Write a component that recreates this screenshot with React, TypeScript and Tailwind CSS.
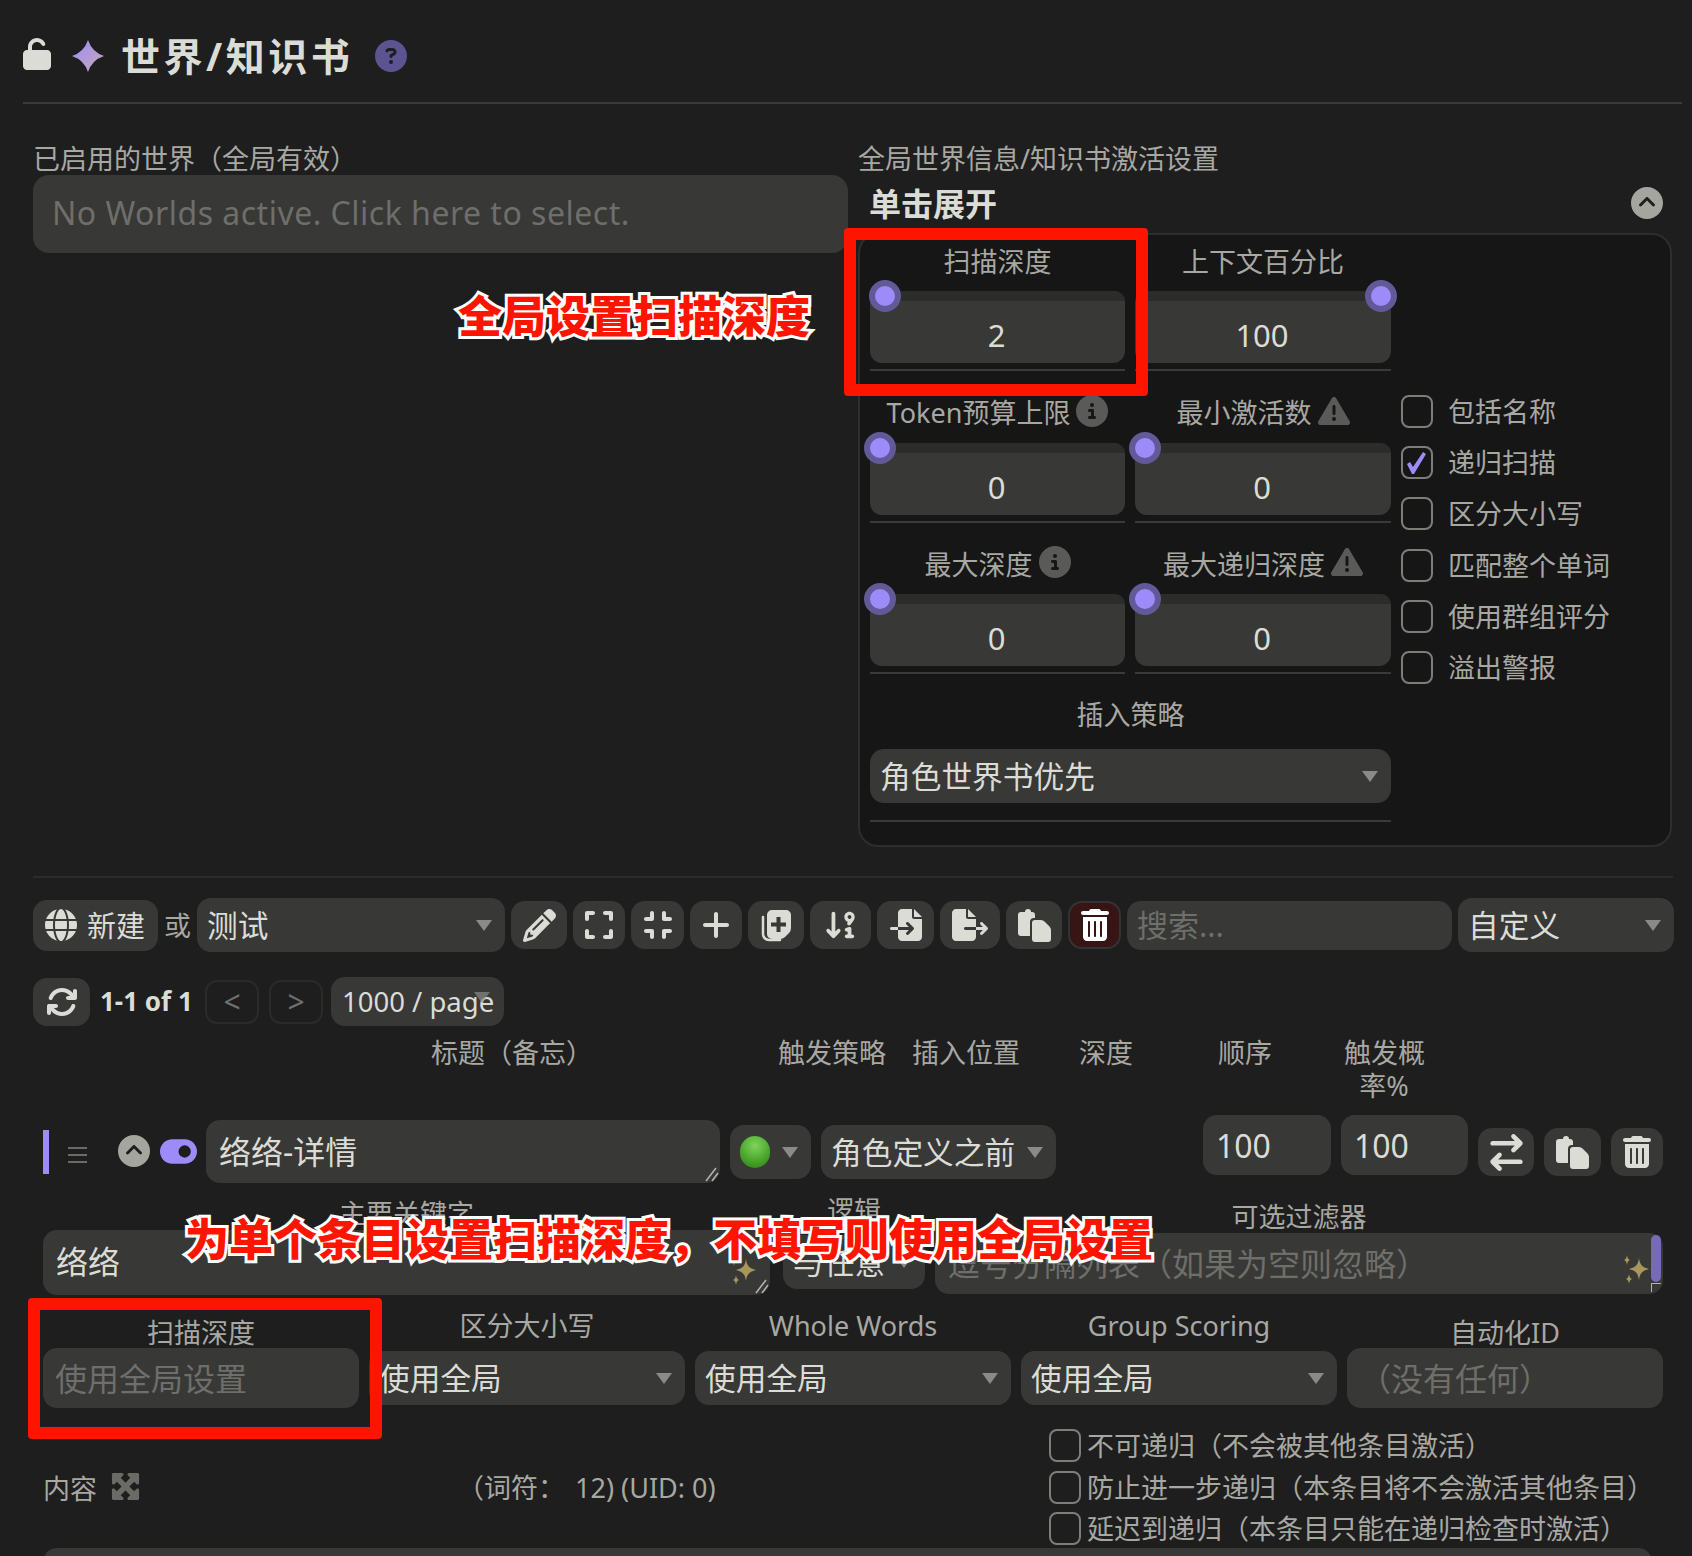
import type { ReactNode } from "react";
import {
  FaArrowDown91,
  FaArrowRightArrowLeft,
  FaArrowsRotate,
  FaCircleChevronUp,
  FaCircleInfo,
  FaCircleQuestion,
  FaCompress,
  FaExpand,
  FaFileExport,
  FaFileImport,
  FaGlobe,
  FaMaximize,
  FaPencil,
  FaPlus,
  FaToggleOn,
  FaTrashCan,
  FaTriangleExclamation,
  FaUnlock,
} from "react-icons/fa6";

const sliders = [
  { label: "扫描深度", value: "2", thumb: "left-[-1px]", top: "" },
  { label: "上下文百分比", value: "100", thumb: "left-[230px]", top: "" },
  { label: "Token预算上限", value: "0", thumb: "left-[-6px]", icon: "info" },
  { label: "最小激活数", value: "0", thumb: "left-[-6px]", icon: "warn" },
  { label: "最大深度", value: "0", thumb: "left-[-6px]", icon: "info" },
  { label: "最大递归深度", value: "0", thumb: "left-[-6px]", icon: "warn" },
];

const checks = ["包括名称", "递归扫描", "区分大小写", "匹配整个单词", "使用群组评分", "溢出警报"];

const entryChecks = [
  "不可递归（不会被其他条目激活）",
  "防止进一步递归（本条目将不会激活其他条目）",
  "延迟到递归（本条目只能在递归检查时激活）",
];

function Arrow() {
  return (
    <svg width="16" height="11" viewBox="0 0 16 11" className="shrink-0">
      <path d="M0 0h16L8 11z" fill="#8a8a86" />
    </svg>
  );
}

function Select({ text, className }: { text: string; className: string }) {
  return (
    <div
      className={`flex h-[54px] items-center justify-between rounded-[14px] bg-[#383836] pl-[10px] pr-[13px] text-[30.700px] text-[#dcdcd7] ${className}`}
    >
      <span className="whitespace-nowrap">{text}</span>
      <Arrow />
    </div>
  );
}

function IconButton({ children, className }: { children: ReactNode; className: string }) {
  return (
    <div
      className={`flex h-[48px] shrink-0 items-center justify-center rounded-[14px] bg-[#383836] text-[#dcdcd7] ${className}`}
    >
      {children}
    </div>
  );
}

function Checkbox({ checked }: { checked?: boolean }) {
  return (
    <div className="flex h-[33px] w-[32px] shrink-0 items-center justify-center rounded-[8px] border-2 border-[#7d7d7a]">
      {checked && (
        <svg width="22" height="22" viewBox="0 0 22 22">
          <path d="M1 12l3-2 3 5L17 0l3 2L8 22h-2z" fill="#9d8bfa" />
        </svg>
      )}
    </div>
  );
}

function Grip() {
  return (
    <svg width="14" height="16" viewBox="0 0 14 16" className="absolute bottom-[1px] right-[1px]">
      <path d="M1 15 11 2M7 15l6-8" stroke="#b5b5b0" strokeWidth="1.5" />
    </svg>
  );
}

function Sparkles({ className }: { className: string }) {
  return (
    <svg width="28" height="30" viewBox="0 0 28 30" className={className}>
      <path d="M16 4c1 7 3 9 10 11-7 2-9 4-10 11-1-7-3-9-10-11 7-2 9-4 10-11z" fill="#a8975a" />
      <path d="M4 1c.5 3 1 4 3 5-2 1-2.500 2-3 5-.5-3-1-4-3-5 2-1 2.500-2 3-5z" fill="#a8975a" />
      <path d="M6 20c.5 3 1 4 3 5-2 1-2.500 2-3 5-.5-3-1-4-3-5 2-1 2.500-2 3-5z" fill="#a8975a" />
    </svg>
  );
}

function CopyPlus() {
  return (
    <svg width="32" height="33" viewBox="0 0 32 33">
      <path
        d="M12 1h14a5 5 0 0 1 5 5v13q0 3-2 5l-4 4q-2 2-5 2h-8a5 5 0 0 1-5-5V6a5 5 0 0 1 5-5zM16.500 8v5.500H11v4h5.500V23h4v-5.500H26v-4h-5.500V8z"
        fill="#dcdcd7"
        fillRule="evenodd"
      />
      <path d="M3 8v17a6 6 0 0 0 6 6h11" fill="none" stroke="#dcdcd7" strokeWidth="2.500" strokeLinecap="round" />
    </svg>
  );
}

function PasteTags({ color = "#dcdcd7" }: { color?: string }) {
  return (
    <svg width="33" height="33" viewBox="0 0 33 33">
      <path
        d="M7 3q0-3 3-3t3 3h1a3 3 0 0 1 3 3v3h-1q-4 0-4 4v14H3a3 3 0 0 1-3-3V6a3 3 0 0 1 3-3z"
        fill={color}
      />
      <path
        d="M17 11h6q2 0 3.500 1.500l5 5q1.500 1.500 1.500 3.500v9a3 3 0 0 1-3 3H17a3 3 0 0 1-3-3V14a3 3 0 0 1 3-3z"
        fill={color}
      />
    </svg>
  );
}

function Thumb({ className }: { className: string }) {
  return (
    <div
      className={`absolute top-[-11px] h-[32px] w-[32px] rounded-full border-[6px] border-[#625a98] bg-[#9d8bfa] ${className}`}
    />
  );
}

export default function App() {
  return (
    <div className="relative h-[1556px] w-[1692px] overflow-hidden bg-[#1e1e1e] font-['Noto_Sans','Noto_Sans_CJK_SC',sans-serif] text-[27px] leading-[33px] text-[#a8a8a3]">
      {/* title bar */}
      <div className="ml-[23px] mr-[10px] flex h-[104px] items-center border-b-2 border-[#3a3a38] pt-[9px]">
        <FaUnlock size={32} className="ml-[-2px] mb-[4px] text-[#dcdcd7]" />
        <svg width="32" height="32" viewBox="0 0 32 32" className="ml-[19px]">
          <defs>
            <linearGradient id="star" x1="0" y1="0" x2="1" y2="1">
              <stop offset="0" stopColor="#9d8bfa" />
              <stop offset="1" stopColor="#c9a9b8" />
            </linearGradient>
          </defs>
          <path d="M16 0Q20 12 32 16Q20 20 16 32Q12 20 0 16Q12 12 16 0z" fill="url(#star)" />
        </svg>
        <div className="ml-[17px] whitespace-nowrap text-[39px] font-bold tracking-[3.500px] text-[#dcdcd7]">
          世界/知识书
        </div>
        <FaCircleQuestion size={32} className="ml-[22px] text-[#5c5490]" />
      </div>

      {/* world selection and global settings */}
      <div className="ml-[33px] mt-[37px] flex gap-[10px]">
        <div className="w-[815px]">
          <div className="h-[34px] translate-y-[1px] whitespace-nowrap">已启用的世界（全局有效）</div>
          <div className="flex h-[78px] items-center rounded-[16px] bg-[#383836] pb-[4px] pl-[19px] text-[32px] tracking-[0.5px] text-[#6e6e6a]">
            No Worlds active. Click here to select.
          </div>
        </div>
        <div className="w-[814px]">
          <div className="h-[34px] translate-y-[1px] whitespace-nowrap">全局世界信息/知识书激活设置</div>
          <div className="flex h-[58px] items-center justify-between pl-[11px] pr-[9px]">
            <span className="mb-[2px] text-[32px] font-bold text-[#dcdcd7]">单击展开</span>
            <FaCircleChevronUp size={32} className="mb-[2px] text-[#a5a5a0]" />
          </div>
          <div className="flex h-[614px] w-[814px] rounded-[20px] border-2 border-[#2e2e2d] bg-[#161616] pl-[10px] pt-[7px]">
            <div className="w-[521px]">
              <div className="grid grid-cols-[255px_256px] gap-x-[10px] gap-y-[22.500px]">
                {sliders.map((s) => (
                  <div key={s.label}>
                    <div className="mb-[9px] flex h-[40px] items-center justify-center gap-[6px] whitespace-nowrap pb-[2px]">
                      {s.label}
                      {s.icon === "info" && <FaCircleInfo size={32} className="mb-[4px] text-[#5a5a58]" />}
                      {s.icon === "warn" && <FaTriangleExclamation size={32} className="mb-[4px] text-[#5a5a58]" />}
                    </div>
                    <div className="relative h-[72px] overflow-visible rounded-[12px] bg-[#383836]">
                      <div className="h-[10px] rounded-t-[12px] bg-[#2c2c2b]" />
                      <Thumb className={s.thumb} />
                      <div className="pr-[2px] pt-[14px] text-center text-[31px] leading-[40px] text-[#dcdcd7]">{s.value}</div>
                    </div>
                    <div className="mt-[6px] h-[2px] bg-[#3a3a38]" />
                  </div>
                ))}
              </div>
              <div className="mt-[21px] flex h-[40px] items-center justify-center pb-[2px]">插入策略</div>
              <Select text="角色世界书优先" className="mt-[14px]" />
              <div className="mt-[17px] h-[2px] bg-[#3a3a38]" />
            </div>
            <div className="ml-[10px] flex flex-col gap-[18.200px] pt-[153px]">
              {checks.map((c, i) => (
                <div key={c} className="flex h-[33px] items-center gap-[15px] whitespace-nowrap">
                  <Checkbox checked={i === 1} />
                  {c}
                </div>
              ))}
            </div>
          </div>
        </div>
      </div>

      <div className="ml-[33px] mt-[29px] h-[22px] w-[1640px] border-t-2 border-[#2c2c2c]" />

      {/* toolbar */}
      <div className="ml-[33px] flex h-[54px] items-center gap-[6px]">
        <div className="flex h-[51px] w-[125px] shrink-0 items-center gap-[10px] rounded-[14px] bg-[#383836] pl-[12px] text-[29px] text-[#dcdcd7]">
          <FaGlobe size={32} />
          新建
        </div>
        <div className="w-[27px] shrink-0 text-center">或</div>
        <Select text="测试" className="w-[308px] shrink-0" />
        <IconButton className="w-[56px]"><FaPencil size={33} /></IconButton>
        <IconButton className="w-[52px]"><FaExpand size={32} /></IconButton>
        <IconButton className="w-[53px]"><FaCompress size={32} /></IconButton>
        <IconButton className="w-[52px]"><FaPlus size={32} /></IconButton>
        <IconButton className="w-[56px]"><CopyPlus /></IconButton>
        <IconButton className="w-[61px]"><FaArrowDown91 size={34} /></IconButton>
        <IconButton className="w-[57px]"><FaFileImport size={32} /></IconButton>
        <IconButton className="w-[60px]"><FaFileExport size={36} /></IconButton>
        <IconButton className="w-[56px]"><PasteTags /></IconButton>
        <div className="flex h-[48px] w-[53px] shrink-0 items-center justify-center rounded-[14px] border-2 border-[#333333] bg-[#381515] text-white">
          <FaTrashCan size={32} />
        </div>
        <div className="flex h-[49px] w-[325px] shrink-0 items-center rounded-[14px] bg-[#383836] pl-[10px] text-[31px] text-[#6e6e6a]">
          搜索...
        </div>
        <Select text="自定义" className="w-[216px] shrink-0" />
      </div>

      {/* pagination */}
      <div className="ml-[33px] mt-[25px] flex h-[49px] items-center">
        <IconButton className="w-[57px]"><FaArrowsRotate size={32} /></IconButton>
        <div className="ml-[10px] w-[105px] whitespace-nowrap text-[26px] font-bold text-[#dcdcd7]">1-1 of 1</div>
        <div className="flex h-[44px] w-[54px] items-center justify-center rounded-[12px] border-2 border-[#2a2a2a] text-[30px] text-[#70706c]">&lt;</div>
        <div className="ml-[10px] flex h-[44px] w-[54px] items-center justify-center rounded-[12px] border-2 border-[#2a2a2a] text-[30px] text-[#70706c]">&gt;</div>
        <div className="relative ml-[8px] flex h-[49px] w-[173px] items-center rounded-[14px] bg-[#383836] pl-[11px] text-[27.500px] text-[#dcdcd7]">
          1000 / page
          <span className="absolute right-[14px] top-[15px] opacity-70"><Arrow /></span>
        </div>
      </div>

      {/* column headers */}
      <div className="mt-[10px] flex h-[66px] whitespace-nowrap">
        <div className="ml-[431px] w-[145px]">标题（备忘）</div>
        <div className="ml-[202px] w-[107px]">触发策略</div>
        <div className="ml-[27px] w-[107px]">插入位置</div>
        <div className="ml-[60px] w-[53px]">深度</div>
        <div className="ml-[86px] w-[53px]">顺序</div>
        <div className="ml-[73px] w-[80px] text-center">
          触发概
          <br />
          率%
        </div>
      </div>

      {/* entry */}
      <div className="mt-[13px] flex h-[68px] items-start">
        <div className="ml-[43px] mt-[15px] h-[44px] w-[6px] bg-[#9d8bfa]" />
        <div className="ml-[19px] mt-[32px] flex h-[16px] w-[19px] flex-col justify-between">
          <div className="h-[2px] bg-[#6a6a66]" />
          <div className="h-[2px] bg-[#6a6a66]" />
          <div className="h-[2px] bg-[#6a6a66]" />
        </div>
        <FaCircleChevronUp size={32} className="ml-[31px] mt-[20px] text-[#a5a5a0]" />
        <FaToggleOn size={37} className="ml-[10px] mt-[18px] shrink-0 text-[#9d8bfa]" />
        <div className="relative ml-[9px] mt-[5px] flex h-[63px] w-[514px] items-center rounded-[14px] bg-[#383836] pl-[13px] text-[32px] text-[#dcdcd7]">
          络络-详情
          <Grip />
        </div>
        <div className="ml-[10px] mt-[10px] flex h-[54px] w-[81px] items-center justify-between rounded-[14px] bg-[#383836] pl-[10px] pr-[13px]">
          <div className="h-[32px] w-[30px] rounded-full bg-[radial-gradient(circle_at_50%_30%,#7fd45a,#3d9a22_70%,#2f7d1a)]" />
          <Arrow />
        </div>
        <Select text="角色定义之前" className="ml-[10px] mt-[10px] w-[235px] shrink-0" />
        <div className="ml-[147px] flex h-[60px] w-[128px] items-center rounded-[14px] bg-[#383836] pl-[13px] text-[32px] text-[#dcdcd7]">100</div>
        <div className="ml-[10px] flex h-[60px] w-[127px] items-center rounded-[14px] bg-[#383836] pl-[13px] text-[32px] text-[#dcdcd7]">100</div>
        <IconButton className="ml-[10px] mt-[13px] w-[56px]"><FaArrowRightArrowLeft size={37} /></IconButton>
        <IconButton className="ml-[10px] mt-[13px] w-[57px]"><PasteTags /></IconButton>
        <IconButton className="ml-[10px] mt-[13px] w-[52px]"><FaTrashCan size={32} /></IconButton>
      </div>

      {/* keywords */}
      <div className="ml-[43px] flex h-[112px] items-start">
        <div className="mt-[14px] w-[727px]">
          <div className="text-center">主要关键字</div>
          <div className="relative flex h-[65px] items-center rounded-[14px] bg-[#383836] pb-[2px] pl-[13px] text-[32px] text-[#dcdcd7]">
            络络
            <Sparkles className="absolute bottom-[10px] right-[12px]" />
            <Grip />
          </div>
        </div>
        <div className="ml-[13px] mt-[11px] w-[142px]">
          <div className="mb-[8px] text-center">逻辑</div>
          <Select text="与任意" className="w-[142px]" />
        </div>
        <div className="ml-[10px] mt-[17px] w-[728px]">
          <div className="text-center">可选过滤器</div>
          <div className="relative flex h-[61px] items-center rounded-[14px] bg-[#383836] pl-[13px] text-[32px] text-[#6e6e6a]">
            逗号分隔列表（如果为空则忽略）
            <Sparkles className="absolute bottom-[10px] right-[12px]" />
            <div className="absolute right-[2px] top-[2px] h-[47px] w-[10px] rounded-full bg-[#776bb8]" />
            <div className="absolute bottom-[2px] right-[2px] h-[9px] w-[10px] border-t border-l border-[#b5b5b0]" />
          </div>
        </div>
      </div>

      {/* per entry options */}
      <div className="ml-[43px] grid h-[113px] w-[1620px] grid-cols-5 items-start gap-x-[10px]">
        <div className="mt-[21px]">
          <div className="h-[32px] text-center">扫描深度</div>
          <div className="flex h-[60px] items-center rounded-[14px] bg-[#383836] pl-[12px] text-[32px] text-[#6e6e6a]">使用全局设置</div>
        </div>
        {["区分大小写", "Whole Words", "Group Scoring"].map((l) => (
          <div key={l} className="mt-[15px]">
            <div className="mb-[9px] h-[32px] -translate-y-[1px] text-center">{l}</div>
            <Select text="使用全局" className="w-full" />
          </div>
        ))}
        <div className="mt-[21px]">
          <div className="h-[32px] text-center">自动化ID</div>
          <div className="flex h-[60px] items-center rounded-[14px] bg-[#383836] pl-[12px] text-[32px] text-[#6e6e6a]">（没有任何）</div>
        </div>
      </div>

      {/* content header */}
      <div className="mt-[21px] flex">
        <div className="ml-[43px] mt-[43px] flex h-[33px] w-[414px] items-center">
          内容
          <FaMaximize size={31} className="ml-[13px] mb-[4px] text-[#6a6a66]" />
        </div>
        <div className="mt-[42px] w-[592px] whitespace-nowrap">
          （词符：&nbsp;<span className="ml-[3px]">12) (UID: 0)</span>
        </div>
        <div className="flex flex-col gap-[8.500px]">
          {entryChecks.map((c) => (
            <div key={c} className="flex h-[33px] items-center gap-[6px] whitespace-nowrap">
              <Checkbox />
              {c}
            </div>
          ))}
        </div>
      </div>
      <div className="ml-[43px] mt-[3px] h-[60px] w-[1609px] rounded-[14px] bg-[#383836]" />

      {/* annotations over the screenshot */}
      <div className="absolute left-[844px] top-[228px] h-[168px] w-[304px] rounded-[4px] border-[12px] border-[#ff1400]" />
      <div className="absolute left-[28px] top-[1298px] h-[141px] w-[354px] rounded-[4px] border-[12px] border-[#ff1400]" />
      <div className="absolute left-[458px] top-[286px] whitespace-nowrap text-[44px] font-black leading-[60px] text-[#ff1400] [paint-order:stroke_fill] [-webkit-text-stroke:6px_white]">
        全局设置扫描深度
      </div>
      <div className="absolute left-[185px] top-[1209px] whitespace-nowrap text-[44px] font-black leading-[60px] text-[#ff1400] [paint-order:stroke_fill] [-webkit-text-stroke:6px_white]">
        为单个条目设置扫描深度，不填写则使用全局设置
      </div>
    </div>
  );
}
